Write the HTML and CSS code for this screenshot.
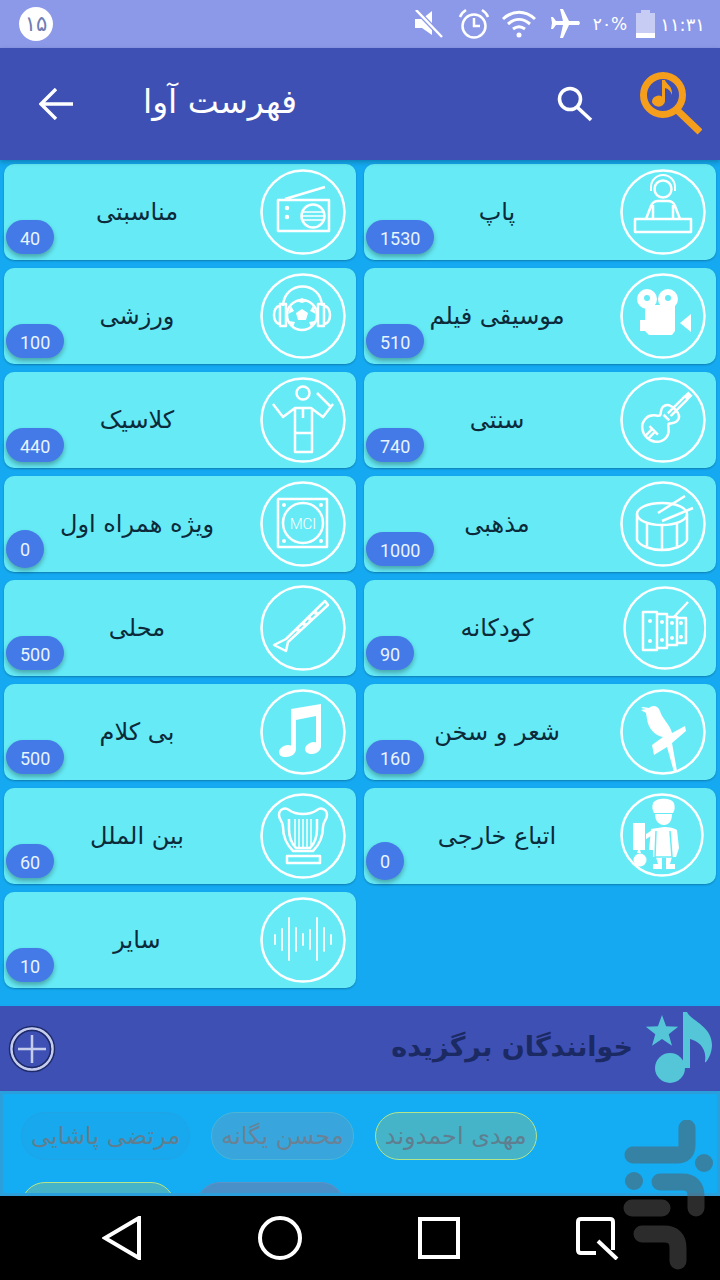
FILE: index.html
```html
<!DOCTYPE html>
<html lang="fa">
<head>
  <meta charset="UTF-8" />
  <title>فهرست آوا</title>
  <link rel="stylesheet" href="styles.css">
</head>
<body>

<div id="phone">
  <div class="status-bar">
    <div class="notif-badge">۱۵</div>
    <div class="status-icons">
      <svg class="st-mute" width="28" height="28" viewBox="0 0 28 28"><path d="M0 9h7l10-8v24L7 18H0z" fill="#fff"/><path d="M1 0l26 27" stroke="#8c99e8" stroke-width="5"/><path d="M1 0l26 27" stroke="#fff" stroke-width="2.500"/></svg>
      <svg class="st-alarm" width="32" height="32" viewBox="0 0 32 32" fill="none" stroke="#fff" stroke-width="2.500"><circle cx="16" cy="18" r="11.500"/><path d="M16 10v8h6M2 9c1-3 3-5 6-7M30 9c-1-3-3-5-6-7"/></svg>
      <svg class="st-wifi" width="34" height="28" viewBox="0 0 34 28" fill="none" stroke="#fff" stroke-width="3"><path d="M1 9c10-9 22-9 32 0M6 14c7-6 15-6 22 0M11 19c4-3 8-3 12 0"/><circle cx="17" cy="25" r="2.500" fill="#fff" stroke="none"/></svg>
      <svg class="st-plane" width="30" height="30" viewBox="0 0 30 30"><path d="M10 0h3l6 12h10l1 2-1 2H19l-6 13h-3l3-13H6l-3 4H1l1-6-1-6h2l3 4h7z" fill="#fff"/></svg>
      <span class="battery-text">۲۰%</span>
      <div class="battery"><div class="battery-cap"></div><div class="battery-body"><div class="battery-fill"></div></div></div>
      <span class="clock">۱۱:۳۱</span>
    </div>
  </div>

  <div class="toolbar">
    <svg class="app-icon" width="64" height="64" viewBox="0 0 64 64">
      <circle cx="25" cy="23" r="19.500" fill="none" stroke="#f59e1b" stroke-width="7"/>
      <path d="M39 38l23 22" stroke="#f59e1b" stroke-width="7"/>
      <path d="M24 8h3c1 4 8 6 7 15-1-3-3-6-7-7v13a6.500 5.500 0 1 1-3-4.500z" fill="#f59e1b"/>
    </svg>
    <svg class="search-icon" width="36" height="36" viewBox="0 0 36 36" fill="none" stroke="#fff" stroke-width="3.600"><circle cx="13" cy="13" r="10.500"/><path d="M20 21l14 13"/></svg>
    <div class="toolbar-title">فهرست آوا</div>
    <svg class="back-icon" width="34" height="32" viewBox="0 0 34 32" fill="none" stroke="#fff" stroke-width="3.400"><path d="M34 16H3M17 1L2 16l15 15"/></svg>
  </div>

  <div class="content">
    <div class="grid">

      <div class="card">
        <svg class="card-icon" viewBox="0 0 86 86"><circle cx="43" cy="43" r="41.500"/><circle cx="43" cy="20" r="8.500"/><path d="M31 22v-4a12 12 0 0 1 24 0v4" stroke-width="2"/><path d="M26 50l5-13q2-5 7-5h10q5 0 7 5l5 13M33 50V36M53 50V36"/><rect x="15" y="50" width="56" height="13"/></svg>
        <div class="card-title">پاپ</div>
        <div class="badge">1530</div>
      </div>
      <div class="card">
        <svg class="card-icon" viewBox="0 0 86 86"><circle cx="43" cy="43" r="41.500"/><path d="M18 31h51v31H18zM25 30l40-12"/><circle cx="53" cy="47" r="11.500"/><path d="M42 43h22M42 47h22M42 51h22" stroke-width="1.500"/><path d="M27 39v.1M27 48v.1" stroke-width="4.500" stroke-linecap="round"/></svg>
        <div class="card-title">مناسبتی</div>
        <div class="badge">40</div>
      </div>

      <div class="card">
        <svg class="card-icon" viewBox="0 0 86 86"><circle cx="43" cy="43" r="41.500"/><g class="solid"><circle cx="27" cy="26" r="10"/><circle cx="48" cy="26" r="10"/><path d="M25 32h30v26l-3 4H29l-4-4zM20 47h6v11h-6zM60 50l11-9v18z"/></g><circle class="hole" cx="27" cy="25" r="3"/><circle class="hole" cx="48" cy="25" r="3"/></svg>
        <div class="card-title">موسیقی فیلم</div>
        <div class="badge">510</div>
      </div>
      <div class="card">
        <svg class="card-icon" viewBox="0 0 86 86"><circle cx="43" cy="43" r="41.500"/><circle cx="42" cy="42" r="15"/><path d="M23 33c1-26 38-26 39 0"/><path d="M20 33c-8 0-8 18 0 18zM26 31h-6v22h6zM64 33c8 0 8 18 0 18zM58 31h6v22h-6z"/><path class="solid" d="M42 36l6 4-2 7h-8l-2-7zM36 28l6 2 6-2-6-3zM28 41l3-8 3 5zM56 41l-3-8-3 5zM33 54l-4-6 6 1zM51 54l4-6-6 1z"/></svg>
        <div class="card-title">ورزشی</div>
        <div class="badge">100</div>
      </div>

      <div class="card">
        <svg class="card-icon" viewBox="0 0 86 86"><circle cx="43" cy="43" r="41.500"/><g transform="translate(45 42) rotate(45)"><path d="M0 -14C-7 -14 -10 -12 -10 -7C-10 -3 -7 -2 -6 1C-7 4 -14 5 -14 13C-14 22 -6 26 0 26C6 26 14 22 14 13C14 5 7 4 6 1C7 -2 10 -3 10 -7C10 -12 7 -14 0 -14Z"/><path d="M-2 -30V-6M2 -30V-6M-4 -2h8M-6 16h12M-2 16v9M2 16v9"/><path class="solid" d="M-3 -36h6v7h-6z"/></g></svg>
        <div class="card-title">سنتی</div>
        <div class="badge">740</div>
      </div>
      <div class="card">
        <svg class="card-icon" viewBox="0 0 86 86"><circle cx="43" cy="43" r="41.500"/><circle cx="43" cy="16" r="6.500"/><path d="M13 27l10 13 12-9h16l12 9 10-13M35 31v25M52 31v25M35 56h17v19H35zM43 31v10M57 16l14 14"/></svg>
        <div class="card-title">کلاسیک</div>
        <div class="badge">440</div>
      </div>

      <div class="card">
        <svg class="card-icon" viewBox="0 0 86 86"><circle cx="43" cy="43" r="41.500"/><ellipse cx="42" cy="33" rx="25" ry="11"/><path d="M17 33v26c3 6 14 10 25 10s22-4 25-10V33M27 43v22M42 45v24M57 43v22"/><path d="M65 15L38 32M73 27L42 40"/></svg>
        <div class="card-title">مذهبی</div>
        <div class="badge">1000</div>
      </div>
      <div class="card">
        <svg class="card-icon" viewBox="0 0 86 86"><circle cx="43" cy="43" r="41.500"/><rect x="18" y="18" width="49" height="48"/><circle cx="43" cy="42" r="20"/><path class="dots" d="M24 24v.1M61 24v.1M24 60v.1M61 60v.1"/><text x="43" y="47.500" class="mci">MCI</text></svg>
        <div class="card-title">ویژه همراه اول</div>
        <div class="badge badge-round">0</div>
      </div>

      <div class="card">
        <svg class="card-icon" viewBox="0 0 86 86"><circle cx="45" cy="43" r="40.500"/><path d="M23 27h14v38H23zM37 29h10v34H37zM47 32h10v28H47zM57 33h9v25h-9zM68 17L53 33"/><path class="dots" d="M30 36v.1M30 56v.1M42 37v.1M42 55v.1M52 38v.1M52 53v.1M61 38v.1M61 52v.1"/></svg>
        <div class="card-title">کودکانه</div>
        <div class="badge">90</div>
      </div>
      <div class="card">
        <svg class="card-icon" viewBox="0 0 86 86"><circle cx="43" cy="43" r="41.500"/><path d="M14 60l12 6 2-9 40-37-3-4-39 38z"/><path class="dots" d="M38 45v.1M44 39v.1M50 34v.1M56 28v.1"/></svg>
        <div class="card-title">محلی</div>
        <div class="badge">500</div>
      </div>

      <div class="card">
        <svg class="card-icon" viewBox="0 0 86 86"><circle cx="43" cy="43" r="41.500"/><path class="solid" d="M23 18l6 1c3-3 9-3 11 3 2 8 10 13 12 22l13-7 1 5-14 12 5 28-3 1-7-25-13 8-2-10 11-8c-8-1-15-9-16-18l-1-6-5-3 5-1-5-1z"/></svg>
        <div class="card-title">شعر و سخن</div>
        <div class="badge">160</div>
      </div>
      <div class="card">
        <svg class="card-icon" viewBox="0 0 86 86"><circle cx="43" cy="43" r="41.500"/><path class="solid" d="M31 20l30-5v42c0 5-5 8-9 8s-7-2-7-5 4-7 9-7l2 .5V27l-20 4v29c0 5-5 8-10 8s-7-2-7-5 4-7 9-7l3 .5z"/></svg>
        <div class="card-title">بی کلام</div>
        <div class="badge">500</div>
      </div>

      <div class="card">
        <svg class="card-icon" viewBox="0 0 86 86"><circle cx="42" cy="42" r="40.500"/><g class="solid"><path d="M33 10c3-5 17-6 21 0 1 4 1 7-1 10H34c-2-3-2-7-1-10z"/><path d="M35 21h17c0 7-3 11-8 11s-9-4-9-11z"/><path d="M13 30h12v27h-5l1 3h-4l1-3h-5zM26 41l8-5 2 4-10 6z"/><circle cx="20" cy="67" r="6.500"/><path d="M31 36l-2 21h4v7h3l2 7h-5v5h9v-11h4v11h9v-5h-5l2-7h4l3-9-2-18c-3-2-7-3-13-3z"/></g><path class="cut" d="M36 38l-1 26h17l-2-26"/></svg>
        <div class="card-title">اتباع خارجی</div>
        <div class="badge badge-round">0</div>
      </div>
      <div class="card">
        <svg class="card-icon" viewBox="0 0 86 86"><circle cx="43" cy="43" r="41.500"/><path d="M27 63h33v7H27zM19 22c0-6 6-8 10-5 4 3 8 4 14 4s10-1 14-4c4-3 10-1 10 5 0 5-4 6-4 12 0 12-6 20-10 24H33c-4-4-10-12-10-24 0-6-4-7-4-12z"/><path d="M29 26v10c0 8 3 15 7 19h14c4-4 7-11 7-19V26"/><path d="M35 26v26M39 26v29M43 26v29M47 26v29M51 26v26" stroke-width="1.500"/></svg>
        <div class="card-title">بین الملل</div>
        <div class="badge">60</div>
      </div>

      <div class="card card-left">
        <svg class="card-icon" viewBox="0 0 86 86"><circle cx="43" cy="43" r="41.500"/><path d="M15 38v9M22 32v21M29 21v42M36 31v23M43 37v11M50 33v19M57 21v42M64 31v23M71 38v9" stroke-width="1.800" stroke-linecap="round"/></svg>
        <div class="card-title">سایر</div>
        <div class="badge">10</div>
      </div>

    </div>
  </div>

  <div class="section-head">
    <svg class="section-note" width="70" height="74" viewBox="0 0 70 74" fill="#55c5d8">
      <circle cx="28" cy="56" r="15"/>
      <path d="M41 0h4c3 8 25 14 25 33 0 7-3 13-6 17-1 1-1 0-1-1 2-12-6-20-15-22v29h-7z"/>
      <polygon points="20,3 24.100,14.300 36.200,14.700 26.700,22.200 30,33.800 20,27 10,33.800 13.300,22.200 3.800,14.700 15.900,14.300"/>
    </svg>
    <div class="section-title">خوانندگان برگزیده</div>
    <svg class="plus-icon" width="48" height="48" viewBox="0 0 48 48" fill="none"><circle cx="24" cy="24" r="22.500" stroke="#1e2a66" stroke-width="1.500"/><circle cx="24" cy="24" r="20.500" stroke="#c6cdec" stroke-width="2.500"/><circle cx="24" cy="24" r="18.500" stroke="#1e2a66" stroke-width="1.500"/><path d="M10 24h28M24 10v28" stroke="#c6cdec" stroke-width="2.500"/></svg>
  </div>

  <div class="chips">
    <div class="chip-row">
      <div class="chip chip-green">مهدی احمدوند</div>
      <div class="chip chip-pale">محسن یگانه</div>
      <div class="chip chip-faint">مرتضی پاشایی</div>
    </div>
    <div class="chip-row">
      <div class="chip chip-grey"></div>
      <div class="chip chip-green chip-short"></div>
    </div>
  </div>

  <div class="nav-bar">
    <svg width="40" height="44" viewBox="0 0 40 44" fill="none" stroke="#fff" stroke-width="4"><path d="M37 2v40L3 22z"/></svg>
    <svg width="44" height="44" viewBox="0 0 44 44" fill="none" stroke="#fff" stroke-width="4"><circle cx="22" cy="22" r="20"/></svg>
    <svg width="42" height="42" viewBox="0 0 42 42" fill="none" stroke="#fff" stroke-width="4"><path d="M2 2h38v38H2z"/></svg>
    <svg width="44" height="44" viewBox="0 0 44 44" fill="none" stroke="#fff" stroke-width="4"><path d="M20 37H5q-3 0-3-3V6q0-3 3-3h29q3 0 3 3v28M22 25l19 18"/></svg>
  </div>

  <svg class="watermark" width="110" height="160" viewBox="610 1120 110 160" fill="none" stroke-width="17" stroke-linecap="round">
    <path d="M687 1128v17q0 10-10 10h-44M660 1182h22q14 0 14 14v12M632 1208h30M642 1234h22q14 0 14 14v13"/>
    <circle class="wm-dot" cx="704" cy="1163" r="9"/>
    <circle class="wm-dot" cx="634" cy="1181" r="9"/>
  </svg>
</div>

</body>
</html>
```

FILE: styles.css
```css
body {
  margin: 0;
  background: #000;
  font-family: "DejaVu Sans", "Noto Sans", sans-serif;
}
#phone {
  position: relative;
  width: 720px;
  height: 1280px;
  overflow: hidden;
  display: flex;
  flex-direction: column;
}

/* status bar */
.status-bar {
  height: 48px;
  background: #8c99e8;
  display: flex;
  align-items: center;
  justify-content: space-between;
  padding: 0 15px 0 19px;
  flex-shrink: 0;
}
.notif-badge {
  width: 34px;
  height: 34px;
  border-radius: 50%;
  background: #fff;
  color: #6f7db4;
  font-size: 21px;
  line-height: 34px;
  text-align: center;
}
.status-icons {
  display: flex;
  align-items: center;
  color: #fff;
}
.st-alarm { margin-left: 15px; }
.st-wifi { margin-left: 12px; }
.st-plane { margin-left: 14px; }
.battery-text {
  margin-left: 13px;
  font-size: 17px;
}
.battery {
  margin-left: 9px;
  width: 19px;
  display: flex;
  flex-direction: column;
  align-items: center;
}
.battery-cap {
  width: 9px;
  height: 3px;
  background: #c6ccf4;
}
.battery-body {
  width: 19px;
  height: 25px;
  background: #c6ccf4;
  display: flex;
  align-items: flex-end;
}
.battery-fill {
  width: 100%;
  height: 5px;
  background: #fff;
}
.clock {
  margin-left: 5px;
  font-size: 18px;
}

/* toolbar */
.toolbar {
  position: relative;
  z-index: 1;
  height: 112px;
  background: #3e50b4;
  box-shadow: 0 2px 5px rgba(0,0,0,0.25);
  display: flex;
  flex-direction: row-reverse;
  align-items: center;
  padding: 0 18px 0 39px;
  flex-shrink: 0;
}
.search-icon {
  margin-right: 45px;
}
.toolbar-title {
  margin-right: 260px;
  margin-top: -6px;
  color: #fff;
  font-size: 33px;
  white-space: nowrap;
}
.back-icon {
  margin-right: auto;
}

/* category grid */
.content {
  background: #14a9f0;
  padding: 4px 4px 18px;
  flex-shrink: 0;
}
.grid {
  direction: rtl;
  display: grid;
  grid-template-columns: 352px 352px;
  gap: 8px;
}
.card {
  position: relative;
  height: 96px;
  box-sizing: border-box;
  background: #66ebf6;
  border-radius: 10px;
  box-shadow: 0 1px 2px rgba(0,0,0,0.25);
  display: flex;
  align-items: center;
  padding-right: 10px;
  padding-left: 10px;
}
.card-left {
  grid-column: 2;
}
.card-icon {
  width: 86px;
  height: 86px;
  flex-shrink: 0;
  fill: none;
  stroke: #fff;
  stroke-width: 2.500;
  stroke-linejoin: round;
}
.card-icon .solid {
  fill: #fff;
  stroke: none;
}
.card-icon .hole {
  fill: #66ebf6;
  stroke: none;
}
.card-icon .cut {
  stroke: #66ebf6;
  stroke-width: 1.500;
}
.card-icon .dots {
  stroke-width: 4;
  stroke-linecap: round;
}
.card-icon .mci {
  fill: #fff;
  stroke: none;
  font-family: Roboto, sans-serif;
  font-size: 15px;
  font-weight: 300;
  text-anchor: middle;
}
.card-title {
  flex: 1;
  text-align: center;
  color: #0d2a3a;
  font-size: 24px;
  white-space: nowrap;
}
.badge {
  position: absolute;
  left: 2px;
  bottom: 6px;
  height: 34px;
  padding: 0 14px;
  border-radius: 17px;
  background: #4479e8;
  box-shadow: 0 3px 5px rgba(0,0,0,0.3);
  color: #e8f4ff;
  font-family: Roboto, sans-serif;
  font-size: 18px;
  line-height: 37px;
  direction: ltr;
}
.badge-round {
  height: 38px;
  bottom: 4px;
  border-radius: 19px;
  line-height: 40px;
}

/* favourite singers */
.section-head {
  height: 85px;
  background: #3e50b4;
  display: flex;
  flex-direction: row-reverse;
  align-items: center;
  padding: 0 8px 0 8px;
  flex-shrink: 0;
}
.section-title {
  margin-right: 9px;
  margin-top: -4px;
  color: #1c2a63;
  font-size: 27px;
  font-weight: bold;
  white-space: nowrap;
}
.plus-icon { margin-right: auto; }
.chips {
  flex: 1;
  min-height: 0;
  overflow: hidden;
  box-sizing: border-box;
  background: #14acf2;
  border: 3px solid #2a9fdc;
  padding: 18px 0 0 18px;
}
.chip-row {
  display: flex;
  flex-direction: row-reverse;
  justify-content: flex-end;
  gap: 21px;
  margin-bottom: 22px;
}
.chip {
  box-sizing: border-box;
  height: 48px;
  border-radius: 24px;
  border: 1px solid transparent;
  padding: 0 9px;
  color: #5f7f90;
  font-size: 24px;
  line-height: 46px;
  white-space: nowrap;
}
.chip-green {
  background: #45b4c8;
  border-color: #b5e58a;
}
.chip-pale {
  background: #38a6dc;
  border-color: #4cb4d8;
  color: #6a8296;
}
.chip-faint {
  background: #18a8ee;
  border-color: #20a4e6;
}
.chip-grey {
  width: 149px;
  background: #4a90c8;
  border-color: #5a94c8;
}
.chip-short { width: 154px; }

/* nav bar */
.nav-bar {
  height: 84px;
  background: #000;
  display: flex;
  align-items: center;
  flex-shrink: 0;
  padding-left: 102px;
  gap: 116px;
}

/* app store watermark, lies over everything */
.watermark {
  position: absolute;
  left: 610px;
  top: 1120px;
  stroke: #595959;
  opacity: 0.5;
}
.wm-dot {
  fill: #595959;
  stroke: none;
}
```
